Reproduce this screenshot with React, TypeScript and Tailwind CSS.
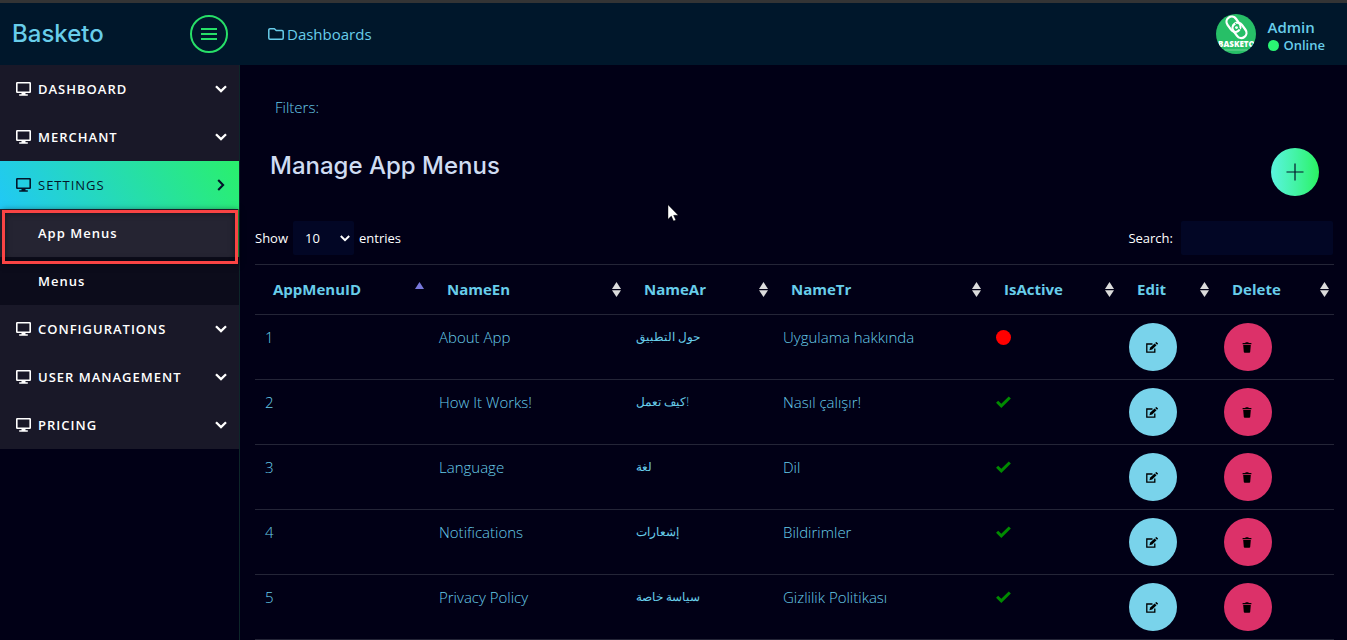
import React from "react";

type IconProps = { className?: string };

const MonitorIcon = ({ className = "" }: IconProps) => (
  <svg viewBox="0 0 15 14" className={`h-3.5 w-[15px] ${className}`} fill="currentColor" aria-hidden="true">
    <path fillRule="evenodd" d="M1.2 0h12.6A1.2 1.2 0 0 1 15 1.200v8.600a1.200 1.200 0 0 1-1.200 1.200H1.200A1.200 1.200 0 0 1 0 9.800V1.200A1.200 1.200 0 0 1 1.200 0ZM1.600 1.500v8h11.800v-8Z" />
    <path d="M5.500 11h4v1.200h2.300v1.500H3.200v-1.500h2.300Z" />
  </svg>
);

const ChevronDown = ({ className = "" }: IconProps) => (
  <svg viewBox="0 0 12 8" className={`h-2 w-3 ${className}`} fill="none" stroke="currentColor" strokeWidth="2.3" aria-hidden="true">
    <path d="M1 1.2 6 6.1l5-4.9" />
  </svg>
);

const ChevronRight = () => (
  <svg viewBox="0 0 8 12" className="mr-0.5 h-3 w-2" fill="none" stroke="currentColor" strokeWidth="2.1" aria-hidden="true">
    <path d="m1.2 1 4.9 5-4.9 5" />
  </svg>
);

const FolderIcon = () => (
  <svg viewBox="0 0 16 12" className="h-3 w-4" fill="none" stroke="currentColor" strokeWidth="1.5" strokeLinejoin="round" aria-hidden="true">
    <path d="M.8 2V10a1.2 1.2 0 0 0 1.2 1.2h12a1.2 1.2 0 0 0 1.2-1.2V3.7a1.2 1.2 0 0 0-1.2-1.2H8.2L6.4.8H2A1.2 1.2 0 0 0 .8 2Z" />
  </svg>
);

const EditIcon = () => (
  <svg viewBox="0 0 12 11" className="mr-0.5 h-[11px] w-3" aria-hidden="true">
    <path d="M6.500 2H.8v8.200h8V6.600" fill="none" stroke="black" strokeWidth="1.300" />
    <path d="M3.400 8.200 4.200 5.400 8.600 1.400l1.900 1.800L6.200 7.400Z" fill="black" />
    <path d="m9.200.9.7-.7a.6.6 0 0 1 .8 0l1.1 1a.6.6 0 0 1 0 .8l-.7.7Z" fill="black" />
  </svg>
);

const TrashIcon = () => (
  <svg viewBox="0 0 10 11" className="mr-0.5 h-[11px] w-2.5" fill="black" aria-hidden="true">
    <path d="M.6 1h2.6l.6-.7h2.4l.6.7h2.6v1.200H.6Z" />
    <path d="M1.200 2.900h7.600l-.6 7a.9.9 0 0 1-.9.800H2.700a.9.9 0 0 1-.9-.800Z" />
  </svg>
);

const CheckIcon = () => (
  <svg viewBox="0 0 15 12" className="h-3 w-[15px]" fill="none" stroke="#008a00" strokeWidth="3" role="img" aria-label="Active">
    <path d="m1.1 5.7 4.2 4.1 8.500-8.300" />
  </svg>
);

const Avatar = () => (
  <svg viewBox="0 0 40 40" className="size-10" role="img" aria-label="Basketo">
    <defs>
      <clipPath id="avatar-clip">
        <circle cx="20" cy="20" r="20" />
      </clipPath>
    </defs>
    <g clipPath="url(#avatar-clip)">
      <rect width="40" height="40" fill="#27bf67" />
      <g fill="none" stroke="white" strokeWidth="2.300">
        <rect x="12.300" y="2" width="10.400" height="16.400" rx="5.200" transform="rotate(-36 17.500 10.200)" />
        <rect x="18.300" y="8.200" width="10.400" height="16.400" rx="5.200" transform="rotate(-36 23.500 16.400)" />
      </g>
      <path d="M19.200 8.800l5.600 7.600" stroke="#27bf67" strokeWidth="1" />
      <circle cx="20.500" cy="13.600" r="1.400" fill="white" />
      <text x="20.500" y="33" textAnchor="middle" fontFamily="Open Sans, sans-serif" fontWeight="800" fontSize="8" fill="white">
        BASKETO
      </text>
      <path d="M8 36h24" stroke="white" strokeOpacity=".45" strokeWidth=".8" />
    </g>
  </svg>
);

const SortIcon = ({ ascending = false }: { ascending?: boolean }) => (
  <svg viewBox="0 0 9 15" className="h-[15px] w-[9px] shrink-0" aria-hidden="true">
    <path d="M4.500 0 9 7H0Z" fill={ascending ? "#7878dc" : "#dcdcdc"} />
    {!ascending && <path d="M0 8.200h9L4.500 15Z" fill="#dcdcdc" />}
  </svg>
);

const columns = [
  { label: "AppMenuID", width: "w-[174px]" },
  { label: "NameEn", width: "w-[197px]" },
  { label: "NameAr", width: "w-[147px]" },
  { label: "NameTr", width: "w-[213px]" },
  { label: "IsActive", width: "w-[133px]" },
  { label: "Edit", width: "w-[95px]" },
  { label: "Delete", width: "w-[120px]" },
];

const rows = [
  { id: 1, en: "About App", ar: "حول التطبيق", tr: "Uygulama hakkında", active: false },
  { id: 2, en: "How It Works!", ar: "كيف تعمل!", tr: "Nasıl çalışır!", active: true },
  { id: 3, en: "Language", ar: "لغة", tr: "Dil", active: true },
  { id: 4, en: "Notifications", ar: "إشعارات", tr: "Bildirimler", active: true },
  { id: 5, en: "Privacy Policy", ar: "سياسة خاصة", tr: "Gizlilik Politikası", active: true },
];

function MenuGroup({ label, open = false }: { label: string; open?: boolean }) {
  const tone = open
    ? "bg-linear-[60deg,#21c8f6,#2af06c] text-[#03152a]"
    : "bg-[#191828] font-semibold text-white";
  return (
    <button type="button" aria-expanded={open} className={`flex h-12 w-full items-center gap-[7px] pr-3 pl-4 text-[13px] tracking-[1px] uppercase ${tone}`}>
      <MonitorIcon />
      <span className="flex-1 pt-px text-left">{label}</span>
      {open ? <ChevronRight /> : <ChevronDown />}
    </button>
  );
}

function Sidebar() {
  return (
    <nav className="w-60 shrink-0 border-r border-[#0d2629]">
      <MenuGroup label="Dashboard" />
      <MenuGroup label="Merchant" />
      <MenuGroup label="Settings" open />
      <div className="relative bg-[#0c0c1b] text-[13px] font-semibold tracking-[1px] text-white">
        <a href="#app-menus" className="flex h-12 items-center border-r border-[#23a53f] bg-[#252432] pt-px pl-[38px]">
          App Menus
        </a>
        <a href="#menus" className="flex h-12 items-center pt-px pl-[38px]">
          Menus
        </a>
        <div className="pointer-events-none absolute top-px right-px left-0.5 h-[54px] border-3 border-[#fa4444] shadow-[0_0_6px_rgba(0,0,0,0.5),inset_0_0_6px_rgba(0,0,0,0.5)]" />
      </div>
      <MenuGroup label="Configurations" />
      <MenuGroup label="User Management" />
      <MenuGroup label="Pricing" />
    </nav>
  );
}

function Header() {
  return (
    <header className="flex h-[65px] items-center border-t-3 border-[#333435] bg-[#00172b] text-[#68cdea]">
      <div className="flex w-60 items-center justify-between pr-3 pl-3">
        <span className="font-[Inter,sans-serif] text-2xl font-medium">Basketo</span>
        <button type="button" aria-label="Toggle menu" className="grid size-[38px] place-items-center rounded-full border-2 border-[#27df68] text-[#27df68]">
          <svg viewBox="0 0 16 12" className="h-3 w-4" stroke="currentColor" strokeWidth="1.800" aria-hidden="true">
            <path d="M0 1h16M0 6h16M0 11h16" />
          </svg>
        </button>
      </div>
      <a href="#dashboards" className="ml-7 flex items-center gap-[3px] text-[15px]">
        <FolderIcon />
        Dashboards
      </a>
      <div className="mr-[22px] ml-auto flex items-center gap-3">
        <Avatar />
        <div className="font-semibold">
          <div className="pt-0.5 text-[15px] leading-5">Admin</div>
          <div className="flex items-center gap-[5px] text-[13px] leading-4">
            <span className="size-[11px] rounded-full bg-[#2af573]" />
            Online
          </div>
        </div>
      </div>
    </header>
  );
}

function MenuTable() {
  return (
    <table className="w-full table-fixed border-b border-[#242537] text-[15px] text-[#68cdea]">
      <thead>
        <tr className="border-t border-[#242537]">
          {columns.map((column, index) => (
            <th key={column.label} className={`h-[50px] pr-[5px] pl-[18px] text-left font-bold ${column.width}`} aria-sort={index === 0 ? "ascending" : undefined}>
              <button type="button" className="flex w-full items-center justify-between">
                {column.label}
                <SortIcon ascending={index === 0} />
              </button>
            </th>
          ))}
        </tr>
      </thead>
      <tbody>
        {rows.map((row) => (
          <tr key={row.id} className="border-t border-[#242537] align-top leading-7 font-light">
            <td className="py-2 pl-2.5">{row.id}</td>
            <td className="py-2 pl-2.5">{row.en}</td>
            <td className="py-2 pl-2.5 text-xs leading-7" lang="ar">{row.ar}</td>
            <td className="py-2 pl-2.5">{row.tr}</td>
            <td className="py-2 pl-2.5">
              <div className="flex h-7 items-center">
                {row.active ? <CheckIcon /> : <span role="img" aria-label="Inactive" className="size-[15px] rounded-full bg-[#ff0000]" />}
              </div>
            </td>
            <td className="py-2 pl-2.5">
              <button type="button" aria-label={`Edit ${row.en}`} className="grid size-12 place-items-center rounded-full bg-[#79d3eb]">
                <EditIcon />
              </button>
            </td>
            <td className="py-2 pl-2.5">
              <button type="button" aria-label={`Delete ${row.en}`} className="grid size-12 place-items-center rounded-full bg-[#dc3169]">
                <TrashIcon />
              </button>
            </td>
          </tr>
        ))}
      </tbody>
    </table>
  );
}

export default function App() {
  return (
    <div className="relative flex min-h-screen flex-col bg-[#010016] font-['Open_Sans','DejaVu_Sans',sans-serif]">
      <Header />
      <div className="flex flex-1">
        <Sidebar />
        <main className="min-w-0 flex-1 pr-[13px] pl-[15px]">
          <div className="px-5 pt-8 text-[15px] leading-5 font-light text-[#68cdea]">Filters:</div>
          <div className="flex items-center justify-between pt-[31px] pr-[15px] pl-[15px]">
            <h1 className="pb-3 font-[Inter,sans-serif] text-2xl font-medium text-[#cfdcf2]">Manage App Menus</h1>
            <button type="button" aria-label="Add menu" className="grid size-12 place-items-center rounded-full bg-linear-to-r from-[#5af3df] to-[#2af25f]">
              <svg viewBox="0 0 18 18" className="size-[18px]" stroke="#03152a" strokeWidth="1.200" aria-hidden="true">
                <path d="M9 .5v17M.5 9h17" />
              </svg>
            </button>
          </div>
          <div className="flex items-center justify-between pt-[25px] pb-[9px] text-[13px] text-white">
            <label className="flex items-center gap-[5px]">
              <span className="pt-px">Show</span>
              <span className="relative flex items-center">
                <select className="h-[34px] w-[61px] appearance-none rounded-xs bg-[#020625] pt-px pl-3">
                  <option>10</option>
                  <option>25</option>
                  <option>50</option>
                  <option>100</option>
                </select>
                <svg viewBox="0 0 10 7" className="pointer-events-none absolute right-1 h-[7px] w-2.5" fill="none" stroke="white" strokeWidth="2" aria-hidden="true">
                  <path d="m.8 1 4.200 4.200L9.200 1" />
                </svg>
              </span>
              <span className="pt-px">entries</span>
            </label>
            <label className="flex items-center gap-2 pr-px">
              <span className="pt-px">Search:</span>
              <input type="search" className="h-[34px] w-[152px] rounded-xs bg-[#020625] px-2" />
            </label>
          </div>
          <MenuTable />
        </main>
      </div>
      <svg viewBox="0 0 12 18" className="pointer-events-none absolute top-[204px] left-[667px] h-[18px] w-3" fill="white" stroke="black" strokeWidth=".4" aria-hidden="true">
        <path d="M1 .8v14.400l3.300-3.100 2.300 5 2.200-1-2.200-4.800h4.600Z" />
      </svg>
    </div>
  );
}
